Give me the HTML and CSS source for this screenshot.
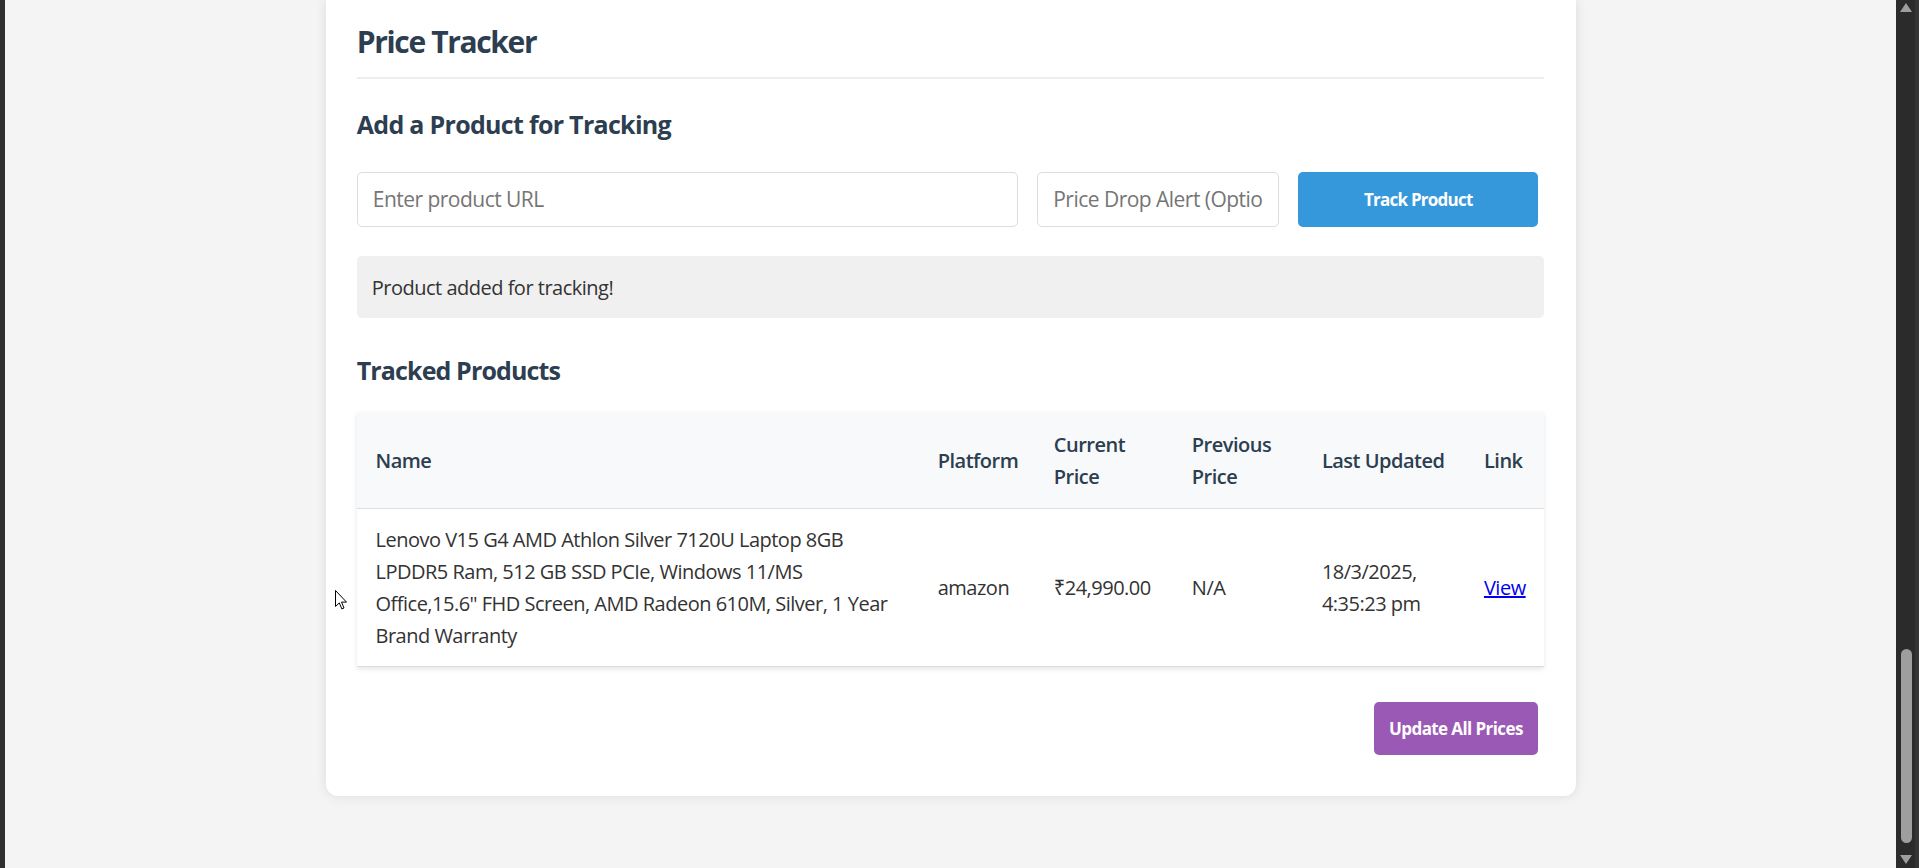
FILE: index.html
```html
<!DOCTYPE html>
<html lang="en">
<head>
<meta charset="utf-8">
<title>Price Tracker</title>
<link rel="stylesheet" href="styles.css">
</head>
<body>
<div class="frame-left"></div>
<div class="viewport">
  <main class="card">
    <h1 class="title">Price Tracker</h1>
    <h2 class="section-title section-title--add">Add a Product for Tracking</h2>
    <form class="track-form">
      <input class="input input--url" type="text" placeholder="Enter product URL">
      <input class="input input--alert" type="text" placeholder="Price Drop Alert (Optional)">
      <button class="btn btn--track" type="button">Track Product</button>
    </form>
    <div class="message">Product added for tracking!</div>
    <h2 class="section-title section-title--tracked">Tracked Products</h2>
    <table class="products">
      <colgroup>
        <col class="col-name">
        <col class="col-platform">
        <col class="col-current">
        <col class="col-previous">
        <col class="col-updated">
        <col class="col-link">
      </colgroup>
      <thead>
        <tr>
          <th>Name</th>
          <th>Platform</th>
          <th>Current Price</th>
          <th>Previous Price</th>
          <th class="nowrap">Last Updated</th>
          <th>Link</th>
        </tr>
      </thead>
      <tbody>
        <tr>
          <td>Lenovo V15 G4 AMD Athlon Silver 7120U Laptop 8GB LPDDR5 Ram, 512 GB SSD PCIe, Windows 11/MS Office,15.6" FHD Screen, AMD Radeon 610M, Silver, 1 Year Brand Warranty</td>
          <td>amazon</td>
          <td>₹24,990.00</td>
          <td>N/A</td>
          <td>18/3/2025, 4:35:23 pm</td>
          <td><a href="#" class="view-link">View</a></td>
        </tr>
      </tbody>
    </table>
    <div class="actions">
      <button class="btn btn--update" type="button">Update All Prices</button>
    </div>
  </main>
  <svg class="cursor" width="12" height="20" viewBox="0 0 12 20" aria-hidden="true">
    <path d="M0.5 0.5 L0.5 16.5 L4.3 12.9 L6.8 18.9 L9 18 L6.5 12.1 L11.5 12.1 Z" fill="#fff" stroke="#000" stroke-width="1" stroke-linejoin="round"/>
  </svg>
</div>
<div class="scrollbar">
  <div class="scrollbar__arrow scrollbar__arrow--up"></div>
  <div class="scrollbar__track">
    <div class="scrollbar__thumb"></div>
  </div>
  <div class="scrollbar__arrow scrollbar__arrow--down"></div>
</div>
</body>
</html>
```

FILE: styles.css
```css
* {
  box-sizing: border-box;
}

html, body {
  margin: 0;
  height: 868px;
  overflow: hidden;
  background: #f4f4f4;
}

body {
  display: flex;
  font-family: "Open Sans", "Noto Sans", sans-serif;
  font-size: 20px;
  line-height: 32px;
  letter-spacing: -0.025em;
  color: #333;
}

.frame-left {
  width: 5px;
  flex: none;
  background: #2f2f2f;
}

.viewport {
  flex: 1;
  position: relative;
  background: #f4f4f4;
  overflow: hidden;
}

.card {
  width: 1250px;
  margin: 0 auto;
  padding: 21.9px 31.25px 41.7px;
  background: #fff;
  border-radius: 0 0 12px 12px;
  box-shadow: 0 0 12px rgba(0, 0, 0, 0.1);
}

.title {
  margin: 0;
  font-size: 30px;
  line-height: 40px;
  font-weight: 700;
  letter-spacing: -0.045em;
  color: #2c3e50;
  padding-bottom: 15.1px;
  border-bottom: 2px solid #eee;
}

.section-title {
  margin: 0;
  font-size: 25px;
  line-height: 34px;
  font-weight: 700;
  letter-spacing: -0.028em;
  color: #2c3e50;
}

.section-title--add {
  margin-top: 28.2px;
}

.section-title--tracked {
  margin-top: 34.7px;
  letter-spacing: -0.035em;
}

.track-form {
  display: flex;
  gap: 19px;
  margin-top: 30.8px;
  height: 55px;
  padding-right: 6px;
}

.input {
  height: 55px;
  padding: 0 15px;
  border: 1px solid #ddd;
  border-radius: 5px;
  font-family: inherit;
  font-size: 21px;
  letter-spacing: -0.025em;
  color: #333;
  background: #fff;
  outline: none;
}

.input::placeholder {
  color: #757575;
}

.input--url {
  flex: 1;
  min-width: 0;
}

.input--alert {
  width: 242px;
  flex: none;
}

.btn {
  border: none;
  border-radius: 5px;
  font-family: inherit;
  font-size: 17px;
  font-weight: 700;
  letter-spacing: -0.045em;
  color: #fff;
  cursor: pointer;
}

.btn--track {
  width: 240px;
  flex: none;
  height: 55px;
  background: #3498db;
}

.message {
  margin-top: 29px;
  padding: 15.6px 15px 14.4px;
  background: #f0f0f0;
  border-radius: 5px;
  color: #333;
}

.products {
  width: 100%;
  margin-top: 25.8px;
  border-collapse: collapse;
  table-layout: fixed;
  background: #fff;
  box-shadow: 0 2px 5px rgba(0, 0, 0, 0.1);
}

.col-name { width: 562px; }
.col-platform { width: 116px; }
.col-current { width: 138px; }
.col-previous { width: 130px; }
.col-updated { width: 162px; }
.col-link { width: 79px; }

.products th,
.products td {
  text-align: left;
  vertical-align: middle;
  border-bottom: 1px solid #ddd;
}

.products th {
  padding: 17px 18.75px 15px;
  background: #f8f9fa;
  font-weight: 600;
  color: #2c3e50;
}

.products td {
  padding: 15px 18.75px 14px;
  color: #333;
}

.nowrap {
  white-space: nowrap;
}

.view-link {
  color: #0000ee;
  text-decoration: underline;
}

.actions {
  display: flex;
  justify-content: flex-end;
  margin-top: 34.3px;
  padding-right: 6.5px;
}

.btn--update {
  height: 53px;
  padding: 0 15px;
  letter-spacing: -0.035em;
  background: #9b59b6;
}

.cursor {
  position: absolute;
  left: 330px;
  top: 590px;
}

.scrollbar {
  width: 23px;
  flex: none;
  display: flex;
  flex-direction: column;
  align-items: flex-start;
  background: #2b2b2b;
  border-right: 4px solid #353535;
  padding-left: 4px;
}

.scrollbar__arrow {
  width: 0;
  height: 0;
  margin: 3px 0 0 0;
  border-left: 6px solid transparent;
  border-right: 6px solid transparent;
}

.scrollbar__arrow--up {
  border-bottom: 9px solid #9e9e9e;
}

.scrollbar__arrow--down {
  margin: 0 0 4px 0;
  border-top: 9px solid #9e9e9e;
}

.scrollbar__track {
  flex: 1;
  width: 12px;
  padding-top: 637px;
  padding-bottom: 11px;
}

.scrollbar__thumb {
  width: 11px;
  height: 194px;
  margin-left: 0.5px;
  background: #9e9e9e;
  border-radius: 6px;
}
```
